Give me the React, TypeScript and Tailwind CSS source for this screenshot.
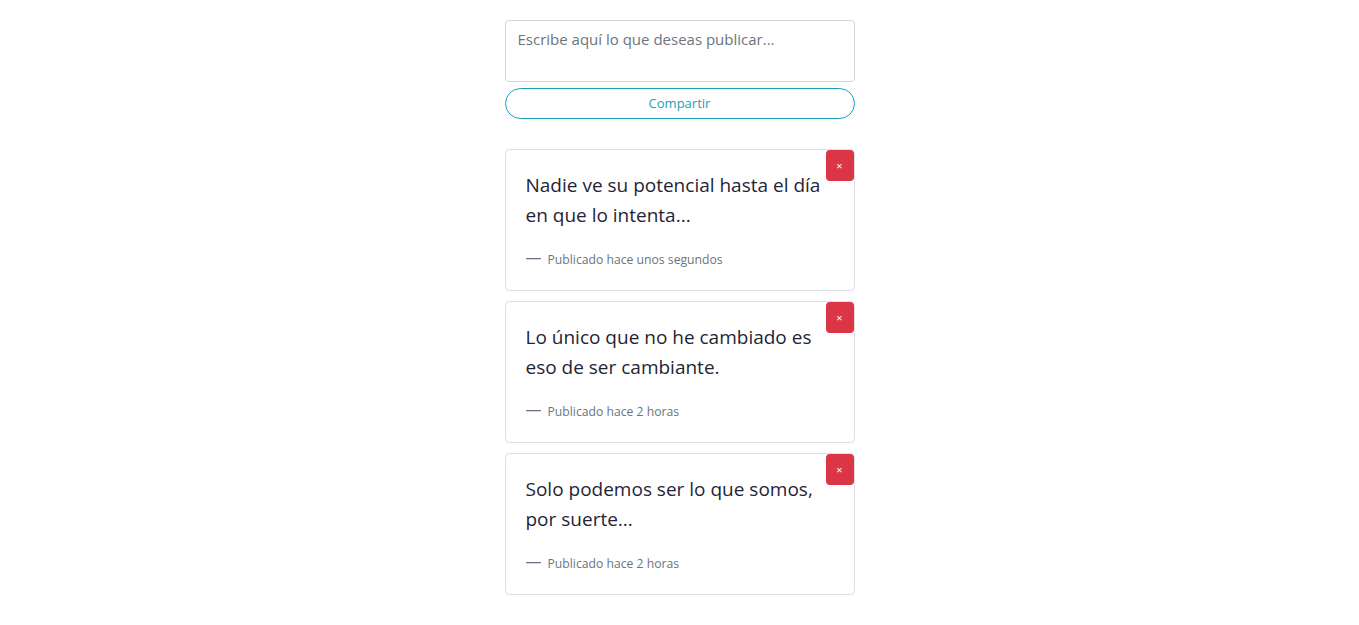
import React from "react";

const posts = [
	{ text: "Nadie ve su potencial hasta el día en que lo intenta...", time: "Publicado hace unos segundos" },
	{ text: "Lo único que no he cambiado es eso de ser cambiante.", time: "Publicado hace 2 horas" },
	{ text: "Solo podemos ser lo que somos, por suerte...", time: "Publicado hace 2 horas" },
];

const App = () => {
	return (
		<div
			className="min-h-screen w-full bg-white text-[#212529]"
			style={{ fontFamily: '"Open Sans", "Noto Sans", sans-serif' }}
		>
			<div className="w-[350px] mx-auto pt-5 flex flex-col">
				<textarea
					placeholder="Escribe aquí lo que deseas publicar..."
					className="w-full h-[62px] border border-[#ced4da] rounded px-3 py-[6px] text-[15px] leading-6 resize-none placeholder:text-[#6c757d] outline-none"
				/>
				<button className="mt-[6px] w-full h-[31px] pt-px border border-[#17a2b8] rounded-full text-[#17a2b8] text-[13px]">
					Compartir
				</button>

				<div className="mt-[30px] flex flex-col gap-[10px]">
					{posts.map((p, i) => (
						<div key={i} className="relative border border-black/[.125] rounded p-5 h-[142px]">
							<button className="absolute top-0 right-0 w-[28px] h-[31px] bg-[#dc3545] rounded text-white text-[11px] leading-none flex items-center justify-center">
								×
							</button>
							<p className="text-[19px] leading-[30px] pr-1 text-[#1f2537]">{p.text}</p>
							<footer className="mt-[20px] text-[12.2px] leading-[19px] text-[#6c757d] flex items-center">
								<span className="text-[16px] leading-none mr-[6px] -translate-y-[3px]">—</span>
								<span>{p.time}</span>
							</footer>
						</div>
					))}
				</div>
			</div>
		</div>
	);
};

export default App;
